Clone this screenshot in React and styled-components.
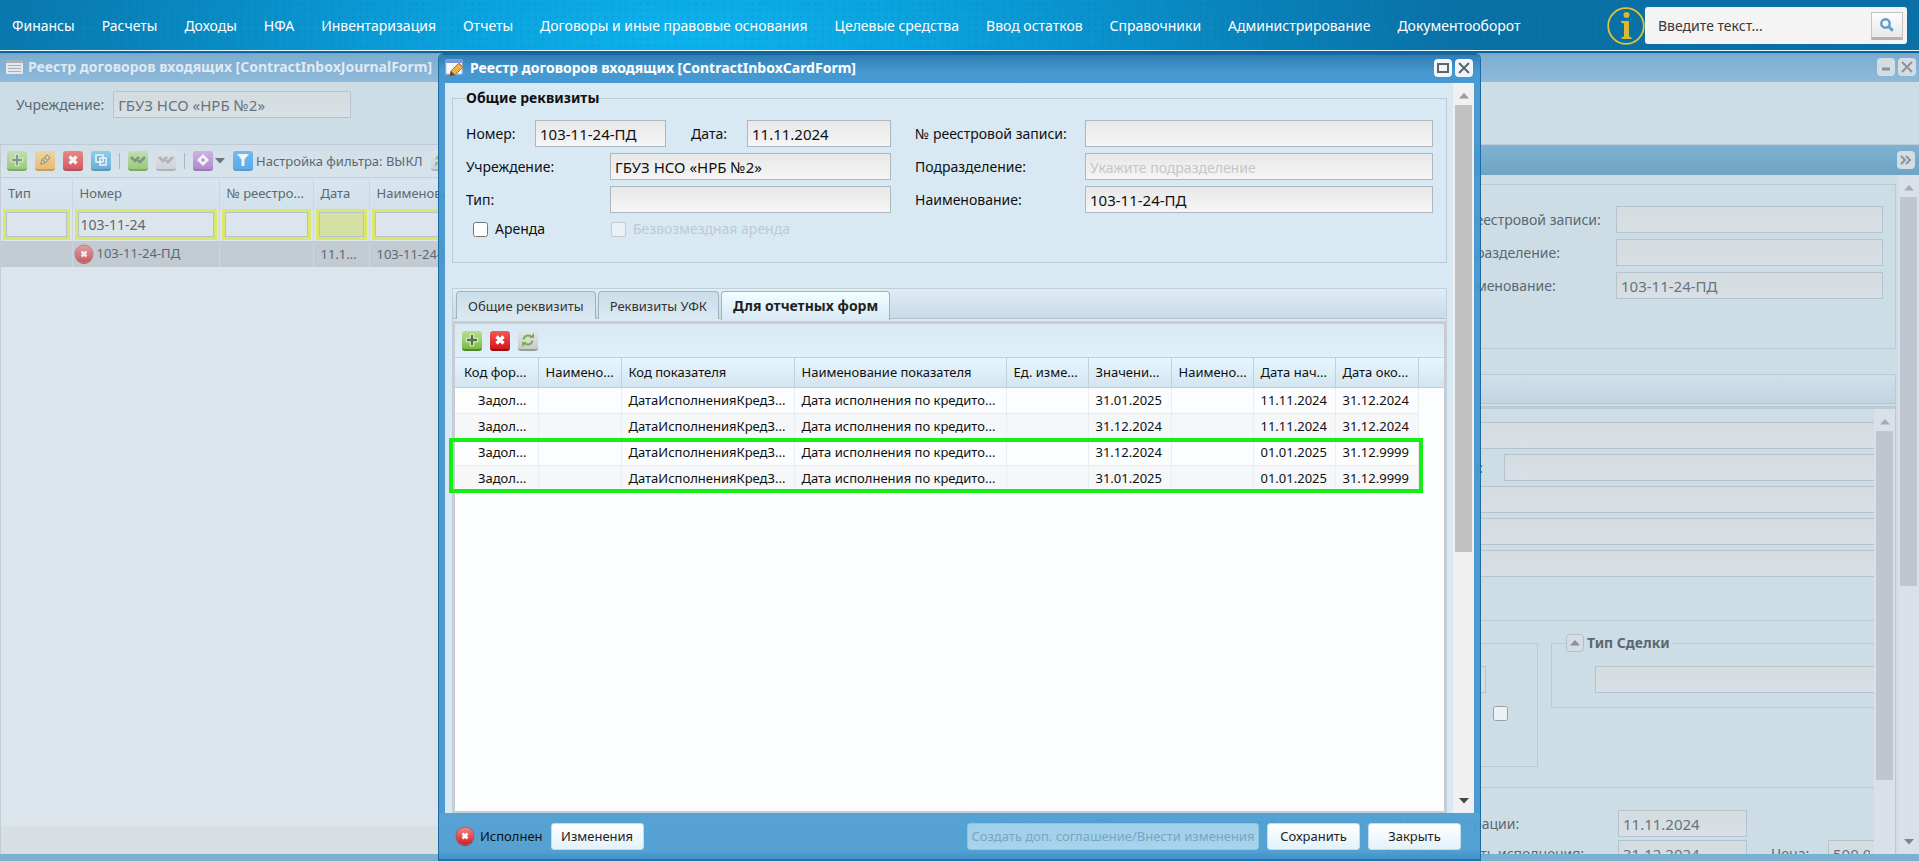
import React, { useState } from 'react'
import styled, { createGlobalStyle, css } from 'styled-components'

const GlobalStyle = createGlobalStyle`
  * { box-sizing: border-box; }
  body {
    margin: 0;
    overflow: hidden;
    background: #cddde6;
    color: #101010;
    font-family: Tahoma, "Noto Sans", "Liberation Sans", sans-serif;
    font-size: 14px;
    line-height: 20px;
  }
  button, input { font: inherit; color: inherit; }
`

const menuItems = [
  'Финансы', 'Расчеты', 'Доходы', 'НФА', 'Инвентаризация', 'Отчеты',
  'Договоры и иные правовые основания', 'Целевые средства', 'Ввод остатков',
  'Справочники', 'Администрирование', 'Документооборот',
]

const tabNames = ['Общие реквизиты', 'Реквизиты УФК', 'Для отчетных форм']

const columns = [
  { title: 'Код фор...', width: 83 },
  { title: 'Наимено...', width: 83 },
  { title: 'Код показателя', width: 173 },
  { title: 'Наименование показателя', width: 212 },
  { title: 'Ед. изме...', width: 82 },
  { title: 'Значени...', width: 83 },
  { title: 'Наимено...', width: 82 },
  { title: 'Дата нач...', width: 82 },
  { title: 'Дата око...', width: 83 },
]

const rows = [
  { value: '31.01.2025', from: '11.11.2024', to: '31.12.2024' },
  { value: '31.12.2024', from: '11.11.2024', to: '31.12.2024' },
  { value: '31.12.2024', from: '01.01.2025', to: '31.12.9999' },
  { value: '31.01.2025', from: '01.01.2025', to: '31.12.9999' },
]

/* ---------- icons ---------- */

const PlusIcon = () => (
  <svg width="16" height="16" viewBox="0 0 14 14"><path d="M5.5 2h3v3.5H12v3H8.5V12h-3V8.5H2v-3h3.5z" fill="#56704f" stroke="#dcf0cc" strokeWidth="1" /></svg>
)
const CrossIcon = () => (
  <svg width="14" height="14" viewBox="0 0 14 14"><path d="M3.5 3.5l7 7M10.5 3.5l-7 7" stroke="#fff" strokeWidth="3.2" /></svg>
)
const PencilIcon = () => (
  <svg width="14" height="14" viewBox="0 0 14 14"><path d="M3 11l1-4 5-5 3 3-5 5zM5 7l2 2M7 5l2.5 2.5" fill="#e8dcae" stroke="#80703c" strokeWidth="1.2" /></svg>
)
const CopyIcon = () => (
  <svg width="14" height="14" viewBox="0 0 14 14" fill="#3f9fd0" stroke="#fff" strokeWidth="1.5"><path d="M2 2h7v7H2zM6 5h6v7H6z" /></svg>
)
const CheckIcon = ({ color = '#4f7446' }) => (
  <svg width="16" height="14" viewBox="0 0 16 14"><path d="M1 4l4 4 4-4M6 5l4 4 5-5" fill="none" stroke={color} strokeWidth="2.8" /></svg>
)
const DiamondIcon = () => (
  <svg width="14" height="14" viewBox="0 0 14 14"><path d="M7 1l6 6-6 6-6-6z" fill="#fff" /><circle cx="7" cy="7" r="1.8" fill="#a66cc0" /></svg>
)
const FunnelIcon = () => (
  <svg width="14" height="14" viewBox="0 0 14 14"><path d="M1 1h12L8.5 6.5V13h-3V6.5z" fill="#fff" /></svg>
)
const RefreshIcon = () => (
  <svg width="14" height="14" viewBox="0 0 14 14" fill="none" stroke="#77b04c" strokeWidth="2"><path d="M2.5 6.5c.5-4 5-5 7.500-3M11.5 7.5c-.5 4-5 5-7.5 3" /><path d="M8 5h5V0zM6 9H1v5z" fill="#77b04c" stroke="none" /></svg>
)
const StatusIcon = () => (
  <svg width="20" height="20" viewBox="0 0 20 20">
    <defs><linearGradient id="status" x1="0" y1="0" x2="0" y2="1"><stop offset="0" stopColor="#f4888a" /><stop offset="1" stopColor="#cf1c25" /></linearGradient></defs>
    <circle cx="10" cy="11" r="9" fill="#7c1e25" />
    <circle cx="10" cy="10" r="9" fill="url(#status)" stroke="#c0555a" />
    <path d="M7.5 7.5l5 5M12.5 7.5l-5 5" stroke="#fff" strokeWidth="2.5" />
  </svg>
)
const Triangle = ({ down, color }) => (
  <svg width="10" height="6" viewBox="0 0 10 6"><path d={down ? 'M0 0h10L5 5.5z' : 'M0 5.5h10L5 0z'} fill={color} /></svg>
)
const ListIcon = () => (
  <svg width="17" height="14" viewBox="0 0 17 14"><path d="M0 0h17v14H0z" fill="#e4e8ec" /><path d="M0 1.5h17" stroke="#a8b2ba" strokeWidth="3" /><path d="M2 5.5h13M2 8.5h13M2 11.5h13" stroke="#a9b3bc" /></svg>
)
const FormIcon = () => (
  <svg width="20" height="20" viewBox="0 0 20 20">
    <path d="M1 2h16v14H1z" fill="#f7f9fd" stroke="#b9cdec" />
    <path d="M1 2h16v3H1z" fill="#7a96df" />
    <path d="M5 18l1-5 8-8 4 4-8 8z" fill="#eeb23e" stroke="#a8752a" />
    <path d="M14 5l4 4-1 1-4-4z" fill="#d98b74" />
    <path d="M5 18l1-5 4 4z" fill="#5c4a38" />
  </svg>
)
const InfoIcon = () => (
  <svg width="38" height="38" viewBox="0 0 38 38">
    <circle cx="19" cy="19" r="17.8" fill="none" stroke="#d9c437" strokeWidth="1.8" />
    <circle cx="19.5" cy="8" r="3" fill="#d9b92d" />
    <path d="M14 14h8v15.5l2.5 1V32h-10v-1.500l2.5-1V16.5L14 15.5z" fill="#d9b92d" />
  </svg>
)
const SearchIcon = () => (
  <svg width="16" height="16" viewBox="0 0 16 16" fill="none" stroke="#5b9dcc"><circle cx="6.5" cy="6.5" r="4.2" strokeWidth="2.4" /><path d="M9.800 9.800l4 4" strokeWidth="3" /></svg>
)

/* ---------- top menu ---------- */

const Page = styled.div`
  display: flex;
  flex-direction: column;
  height: 100vh;
  position: relative;
`
const TopBar = styled.header`
  display: flex;
  align-items: center;
  height: 53px;
  padding: 0 12px;
  flex: none;
  border-bottom: 2px solid #0d6699;
  box-shadow: inset 0 -1px 0 #e8f8ff;
  background:
    radial-gradient(circle, rgba(0, 50, 100, 0.06) 1px, transparent 2px) 0 0 / 7px 7px,
    radial-gradient(ellipse 780px 240px at 690px 34px, #0cb4ee 0%, #0a9fdb 35%, #0981b8 75%, #0971a6 100%);
`
const Menu = styled.nav`
  display: flex;
  flex: 1;
  gap: 27px;
  white-space: nowrap;
`
const MenuLink = styled.a`
  color: #fff;
  text-decoration: none;
`
const InfoButton = styled.button`
  display: flex;
  padding: 0;
  border: 0;
  background: none;
`
const SearchBox = styled.form`
  display: flex;
  align-items: center;
  width: 262px;
  height: 37px;
  padding: 4px;
  border-radius: 3px;
  background: #f4f4f4;
`
const SearchInput = styled.input`
  flex: 1;
  min-width: 0;
  padding: 0 9px;
  border: 0;
  background: none;
  &::placeholder { color: #383838; opacity: 1; }
`
const SearchButton = styled.button`
  display: flex;
  align-items: center;
  justify-content: center;
  width: 32px;
  height: 28px;
  border: 1px solid #c4c4c4;
  border-bottom: 3px solid #b4b4b4;
  background: linear-gradient(#fdfdfd, #e9e9e9);
`

/* ---------- shared parts ---------- */

const Input = styled.input`
  display: block;
  width: ${({ $width }) => ($width ? `${$width}px` : 'auto')};
  flex: ${({ $width }) => ($width ? 'none' : 1)};
  min-width: 0;
  height: 27px;
  padding: 0 4px;
  border: 1px solid #adb7c0;
  border-radius: 0;
  background: linear-gradient(#e8e8e8, #f5f5f5);
  font-size: 15px;
  &::placeholder { color: #c4c7ca; opacity: 1; font-size: 14px; }
  ${({ $muted }) => $muted && css`
    border-color: #b3c3d0;
    background: linear-gradient(#d4dcdf, #d9dfe6);
    color: #68747d;
  `}
  ${({ $cut }) => $cut && css`border-right: 0;`}
`
const Label = styled.label`
  flex: none;
  width: ${({ $width }) => ($width ? `${$width}px` : 'auto')};
  text-align: ${({ $align }) => $align || 'left'};
  white-space: nowrap;
`
const Line = styled.div`
  display: flex;
  align-items: center;
  gap: ${({ $gap }) => $gap || 0}px;
`
const Checkbox = styled.input.attrs({ type: 'checkbox' })`
  width: 15px;
  height: 15px;
  margin: 0;
  opacity: ${({ $muted }) => ($muted ? 0.6 : 1)};
`
const TitleBar = styled.div`
  display: flex;
  align-items: center;
  gap: 5px;
  height: 29px;
  flex: none;
  padding: 0 3px 2px 6px;
  color: #fff;
  font-weight: bold;
  background: ${({ $muted }) => ($muted ? 'linear-gradient(#7cadd0, #8fbada)' : 'linear-gradient(rgba(44, 124, 180, .97), rgba(68, 152, 208, .97) 60%)')};
  border-top: 1px solid ${({ $muted }) => ($muted ? '#6aa3cb' : '#1c65a0')};
`
const Title = styled.span`
  flex: 1;
  white-space: nowrap;
  color: ${({ $muted }) => ($muted ? '#dfeaf3' : '#fff')};
`
const WindowButtons = styled.span`
  display: flex;
  gap: 3px;
  padding-right: ${({ $inset }) => $inset || 0}px;
`
const WindowButton = styled.button`
  display: flex;
  align-items: center;
  justify-content: center;
  width: 18px;
  height: 18px;
  padding: 0;
  border: 0;
  border-radius: 4px;
  background: ${({ $muted }) => ($muted ? '#d5dde4' : '#f2f5f9')};
  color: ${({ $muted }) => ($muted ? '#8b949b' : '#5c6670')};
`
const tones = {
  green: ['#b8e08c', '#79bd43', '#4f8a2a'],
  red: ['#f25a52', '#d8141b', '#8c1015'],
  orange: ['#fbcf7c', '#f2a83a', '#b87c2c'],
  blue: ['#6fc3ea', '#2f97cd', '#1f6d99'],
  sky: ['#3aa8f4', '#1d8fe6', '#1775c0'],
  violet: ['#c99adf', '#a05cc0', '#774391'],
  gray: ['#e3e5e6', '#c9ccce', '#979b9e'],
}
const ToolButton = styled.button`
  display: flex;
  align-items: center;
  justify-content: center;
  width: 20px;
  height: 20px;
  flex: none;
  padding: 0;
  border: 0;
  border-bottom: 2px solid ${({ $tone }) => tones[$tone][2]};
  border-radius: 3px;
  background: linear-gradient(${({ $tone }) => tones[$tone][0]}, ${({ $tone }) => tones[$tone][1]});
  opacity: ${({ $fade }) => ($fade ? 0.65 : 1)};
`
const Track = styled.div`
  display: flex;
  flex-direction: column;
  align-items: center;
  width: 21px;
  flex: none;
  padding: 0 2px 9px;
  background: ${({ $muted }) => ($muted ? '#d9e0e7' : '#f0f0f0')};
`
const TrackCap = styled.div`
  display: flex;
  align-items: center;
  height: ${({ $end }) => ($end ? 'auto' : '22px')};
  margin-top: ${({ $end }) => ($end ? 'auto' : 0)};
  padding-top: ${({ $end }) => ($end ? 0 : 4)}px;
`
const Thumb = styled.div`
  width: 17px;
  height: ${({ $size }) => $size}%;
  background: ${({ $muted }) => ($muted ? '#c0c6cf' : '#c1c1c1')};
`

const Scrollbar = ({ size, muted, noEnd }) => (
  <Track $muted={muted}>
    <TrackCap><Triangle color={muted ? '#a3adb5' : '#9a9a9a'} /></TrackCap>
    <Thumb $size={size} $muted={muted} />
    {!noEnd && <TrackCap $end><Triangle down color={muted ? '#7d868d' : '#444'} /></TrackCap>}
  </Track>
)

/* ---------- journal window ---------- */

const Journal = styled.main`
  display: flex;
  flex-direction: column;
  flex: 1;
  min-height: 0;
  color: #5c6870;
  border-bottom: 7px solid #7ab0d1;
`
const JournalFilter = styled.div`
  flex: none;
  height: 63px;
  padding: 9px 16px;
  border-bottom: 1px solid #bccbd5;
`
const Split = styled.div`
  display: flex;
  flex: 1;
  min-height: 0;
`
const JournalGrid = styled.section`
  display: flex;
  flex-direction: column;
  flex: 1;
  min-width: 0;
  background: #dce5ec;
  border-left: 1px solid #c3cdd5;
`
const Toolbar = styled.div`
  display: flex;
  align-items: center;
  gap: 8px;
  height: 32px;
  flex: none;
  padding: 0 6px;
  font-size: 13px;
  white-space: nowrap;
  background: linear-gradient(#d3dfe8, #d8e4ec);
`
const Divider = styled.span`
  width: 1px;
  height: 16px;
  flex: none;
  background: #a9b7c1;
`
const DropTool = styled.span`
  display: flex;
  align-items: center;
  gap: 2px;
`
const FilterTool = styled.span`
  display: flex;
  align-items: center;
  gap: 3px;
`
const JournalTable = styled.table`
  width: 100%;
  table-layout: fixed;
  border-collapse: collapse;
  font-size: 13px;
  th, td {
    padding: 0 7px;
    overflow: hidden;
    text-align: left;
    font-weight: normal;
    white-space: nowrap;
    border-right: 1px solid #ccd6de;
  }
  th {
    height: 31px;
    border-top: 1px solid #c3cfd8;
    background: linear-gradient(#d7e6ee, #d2e0ea);
  }
`
const FilterCell = styled.td`
  && { height: 32px; padding: 0 2px; }
`
const FilterInput = styled.input`
  display: block;
  width: 100%;
  height: 31px;
  padding: 0 3px;
  border: 3px solid #dae76a;
  box-shadow: inset 0 0 0 1px #b7c0d0;
  border-radius: 0;
  font-size: 14px;
  background: ${({ $filled }) => ($filled ? '#d5e1a4' : '#dce5ec')};
`
const SelectedRow = styled.tr`
  height: 26px;
  background: #c2cad2;
`
const StatusCell = styled.td`
  && { padding: 0 1px; }
  svg { opacity: 0.65; vertical-align: middle; margin-right: 3px; }
`
const JournalFooter = styled.div`
  height: 28px;
  margin-top: auto;
  background: #d8dfe3;
`

/* ---------- right panel ---------- */

const SidePanel = styled.section`
  display: flex;
  flex-direction: column;
  flex: 1;
  min-width: 0;
`
const PanelHeader = styled.div`
  display: flex;
  align-items: center;
  justify-content: flex-end;
  height: 30px;
  flex: none;
  padding: 0 4px;
  background: linear-gradient(#7db2d4, #6ea3c3);
`
const PanelBody = styled.div`
  display: flex;
  flex: 1;
  min-height: 0;
`
const PanelContent = styled.div`
  display: flex;
  flex-direction: column;
  flex: 1;
  min-width: 0;
  padding: 9px 2px 0 8px;
`
const PanelGroup = styled.div`
  display: flex;
  flex-direction: column;
  align-items: flex-end;
  gap: 6px;
  height: 165px;
  flex: none;
  padding: 21px 12px;
  border: 1px solid #b9cad4;
`
const PanelTabs = styled.div`
  display: flex;
  flex-direction: column;
  flex: 1;
  min-height: 0;
  margin-top: 25px;
  border: 1px solid #b9cad4;
  border-bottom: 0;
`
const PanelTabStrip = styled.div`
  height: 34px;
  flex: none;
  border-bottom: 3px solid #bccad3;
  background: linear-gradient(#cfe0ea, #c3d5e1 28px, #b3c3ce 28px, #b3c3ce 29px, #cddde6 29px);
`
const PanelScroll = styled.div`
  display: flex;
  flex: 1;
  min-height: 0;
`
const Details = styled.div`
  flex: 1;
  min-width: 0;
  padding: 13px 0 0 8px;
  overflow: hidden;
`
const Stack = styled.div`
  display: flex;
  flex-direction: column;
  gap: ${({ $gap }) => $gap}px;
  padding-top: ${({ $top }) => $top || 0}px;
  ${Line} { height: 27px; }
`
const Rule = styled.hr`
  height: 1px;
  margin: ${({ $top }) => $top}px 0 0;
  border: 0;
  background: #b9cad4;
`
const Groups = styled.div`
  display: grid;
  grid-template-columns: 1fr 323px;
  gap: 13px;
  align-items: start;
  margin-top: 12px;
`
const PlainGroup = styled.div`
  height: 124px;
  margin-top: 10px;
  padding: 22px 29px 0 13px;
  border: 1px solid #b9cad4;
`
const PlainGroupRow = styled.div`
  display: flex;
  padding-right: ${({ $inset }) => $inset || 0}px;
  margin-bottom: 13px;
  justify-content: flex-end;
`
const DealGroup = styled.fieldset`
  display: flex;
  height: 75px;
  min-width: 0;
  margin: 0;
  padding: 13px 0 0 43px;
  border: 1px solid #b9cad4;
  border-right: 0;
`
const DealLegend = styled.legend`
  display: flex;
  align-items: center;
  gap: 3px;
  margin-left: -31px;
  padding-right: 2px;
  font-weight: bold;
`
const ToggleButton = styled(WindowButton)`
  border: 1px solid #b2bec8;
`

/* ---------- card window ---------- */

const Card = styled.section`
  display: flex;
  flex-direction: column;
  position: absolute;
  inset: 53px 0 0;
  width: 100%;
  max-width: 1043px;
  margin: 0 auto;
  border: 1px solid #1c6aa5;
  border-bottom: 2px solid #1d74b0;
  border-radius: 6px 6px 0 0;
  overflow: hidden;
`
const CardFrame = styled.div`
  display: flex;
  flex: 1;
  min-height: 0;
  border: solid rgba(68, 150, 206, 0.94);
  border-width: 0 6px;
  background: #d9e9f4;
  background-clip: padding-box;
`
const CardContent = styled.div`
  display: flex;
  flex-direction: column;
  flex: 1;
  min-width: 0;
  padding: 5px 6px 0 7px;
`
const Requisites = styled.fieldset`
  display: grid;
  grid-template-columns: 425px 1fr;
  gap: 6px 24px;
  height: 175px;
  flex: none;
  align-content: start;
  min-width: 0;
  margin: 0;
  padding: 12px 13px 0;
  border: 1px solid #bfcbd3;
`
const Legend = styled.legend`
  padding: 0;
  font-weight: bold;
`
const CheckLine = styled(Line)`
  height: 20px;
  padding-left: 7px;
  color: ${({ $off }) => ($off ? '#bccad3' : 'inherit')};
`
const TabPanel = styled.div`
  display: flex;
  flex-direction: column;
  flex: 1;
  min-height: 0;
  margin-top: 25px;
  border: 1px solid #c3ced6;
  border-bottom: 0;
`
const TabStrip = styled.div`
  display: flex;
  gap: 2px;
  height: 32px;
  flex: none;
  padding: 2px 3px 0;
  background: linear-gradient(#deedf7, #c9dbe7 29px, #b3c3ce 29px, #b3c3ce 30px, #d9e9f4 30px);
`
const Tab = styled.button`
  height: 28px;
  padding: 0 11px;
  border: 1px solid #9fb4c2;
  border-bottom: 0;
  border-radius: 4px 4px 0 0;
  color: #333;
  font-size: 13px;
  background: linear-gradient(#cbdde9, #dbe9f2);
  ${({ $active }) => $active && css`
    height: 29px;
    color: #222;
    font-size: 14px;
    font-weight: bold;
    background: linear-gradient(#f0ffff, #d9e9f4);
  `}
`
const GridBox = styled.div`
  position: relative;
  flex: 1;
  min-height: 0;
  border: 2px solid #c9cdd1;
  border-width: 3px 2px 2px;
  background: #fcfdfe;
`
const CardToolbar = styled(Toolbar)`
  height: 34px;
  padding: 0 7px;
  background: linear-gradient(#d9e9f4, #e0f0fa);
  border-bottom: 1px solid #c4d0d8;
`
const Table = styled.table`
  width: 100%;
  table-layout: fixed;
  border-collapse: collapse;
  font-size: 13px;
  th, td {
    padding: 0 0 0 7px;
    text-align: left;
    font-weight: normal;
    white-space: nowrap;
  }
  th {
    height: 29px;
    border-right: 1px solid #c3d0d8;
    border-bottom: 1px solid #c0ccd4;
    background: linear-gradient(#e6f6ff, #d3e5f0);
  }
  th:first-child { padding-left: 9px; }
  td {
    height: 26px;
    border-right: 1px solid #ebedef;
    border-bottom: 1px solid #e8eaec;
  }
  td:first-child { padding-left: 23px; }
  tbody tr:nth-child(even) { background: #f6f7f9; }
  th:last-child, td:last-child { border-right: 0; }
  td:last-child { border-bottom: 0; background: #fcfdfe; }
`
const Highlight = styled.div`
  position: absolute;
  top: 114px;
  left: -6px;
  right: 21px;
  height: 55px;
  border: 4px solid #14f014;
  pointer-events: none;
`
const CardFooter = styled.footer`
  display: flex;
  align-items: center;
  gap: 8px;
  height: 46px;
  flex: none;
  padding: 0 19px 0 16px;
  font-size: 13px;
  background: linear-gradient(rgba(78, 158, 210, 0.95) 80%, rgba(62, 144, 200, 0.95));
`
const Status = styled.span`
  display: flex;
  align-items: center;
  gap: 5px;
`
const Spacer = styled.span`
  flex: 1;
`
const FooterButton = styled.button`
  min-width: 93px;
  height: 27px;
  padding: 0 2px;
  border: 1px solid #c2dced;
  border-radius: 3px;
  color: #222;
  white-space: nowrap;
  background: linear-gradient(#fff, #e2f2fb);
  &:disabled {
    width: 292px;
    border-color: #8fc3e2;
    color: #78a6c2;
    background: linear-gradient(#9fd0ea, #a8d3ec);
  }
`

const JournalWindow = () => (
  <Journal>
    <TitleBar $muted>
      <ListIcon />
      <Title $muted>Реестр договоров входящих [ContractInboxJournalForm]</Title>
      <WindowButtons>
        <WindowButton $muted aria-label="Свернуть"><svg width="10" height="10"><path d="M1 7h8" stroke="currentColor" strokeWidth="3" /></svg></WindowButton>
        <WindowButton $muted aria-label="Закрыть"><svg width="12" height="12"><path d="M1 1l10 10M11 1L1 11" stroke="currentColor" strokeWidth="2" /></svg></WindowButton>
      </WindowButtons>
    </TitleBar>
    <JournalFilter>
      <Line $gap={9}>
        <Label htmlFor="j-org">Учреждение:</Label>
        <Input id="j-org" $muted $width={238} defaultValue="ГБУЗ НСО «НРБ №2»" />
      </Line>
    </JournalFilter>
    <Split>
      <JournalGrid>
        <Toolbar>
          <ToolButton $fade $tone="green" aria-label="Добавить"><PlusIcon /></ToolButton>
          <ToolButton $fade $tone="orange" aria-label="Изменить"><PencilIcon /></ToolButton>
          <ToolButton $fade $tone="red" aria-label="Удалить"><CrossIcon /></ToolButton>
          <ToolButton $fade $tone="blue" aria-label="Копировать"><CopyIcon /></ToolButton>
          <Divider />
          <ToolButton $fade $tone="green" aria-label="Исполнить"><CheckIcon /></ToolButton>
          <ToolButton $fade $tone="gray" aria-label="Отменить"><CheckIcon color="#9aa0a4" /></ToolButton>
          <Divider />
          <DropTool>
            <ToolButton $fade $tone="violet" aria-label="Действия"><DiamondIcon /></ToolButton>
            <Triangle down color="#68737b" />
          </DropTool>
          <FilterTool>
            <ToolButton $fade $tone="sky" aria-label="Фильтр"><FunnelIcon /></ToolButton>
            Настройка фильтра: ВЫКЛ
          </FilterTool>
          <ToolButton $fade $tone="gray" aria-label="Обновить"><RefreshIcon /></ToolButton>
        </Toolbar>
        <JournalTable>
          <colgroup>
            <col width="71" /><col width="147" /><col width="94" /><col width="56" /><col />
          </colgroup>
          <thead>
            <tr><th>Тип</th><th>Номер</th><th>№ реестро...</th><th>Дата</th><th>Наименование</th></tr>
          </thead>
          <tbody>
            <tr>
              <FilterCell><FilterInput aria-label="Тип" /></FilterCell>
              <FilterCell><FilterInput aria-label="Номер" defaultValue="103-11-24" /></FilterCell>
              <FilterCell><FilterInput aria-label="№ реестровой записи" /></FilterCell>
              <FilterCell><FilterInput aria-label="Дата" $filled /></FilterCell>
              <FilterCell><FilterInput aria-label="Наименование" /></FilterCell>
            </tr>
            <SelectedRow>
              <td />
              <StatusCell><StatusIcon />103-11-24-ПД</StatusCell>
              <td />
              <td>11.1...</td>
              <td>103-11-24-ПД</td>
            </SelectedRow>
          </tbody>
        </JournalTable>
        <JournalFooter />
      </JournalGrid>
      <SidePanel>
        <PanelHeader>
          <WindowButton $muted aria-label="Свернуть панель"><svg width="12" height="10" fill="none" stroke="currentColor" strokeWidth="2"><path d="M1 1l4 4-4 4M6 1l4 4-4 4" /></svg></WindowButton>
        </PanelHeader>
        <PanelBody>
          <PanelContent>
            <PanelGroup>
              <Line><Label htmlFor="p-reg" $width={167}>№ реестровой записи:</Label><Input id="p-reg" $muted $width={267} /></Line>
              <Line><Label htmlFor="p-dep" $width={167}>Подразделение:</Label><Input id="p-dep" $muted $width={267} /></Line>
              <Line><Label htmlFor="p-name" $width={167}>Наименование:</Label><Input id="p-name" $muted $width={267} defaultValue="103-11-24-ПД" /></Line>
            </PanelGroup>
            <PanelTabs>
              <PanelTabStrip />
              <PanelScroll>
                <Details>
                  <Stack $gap={5}>
                    <Line><Input $muted $cut aria-label="Вид договора" /></Line>
                    <Line $gap={21}><Label htmlFor="p-basis" $width={506} $align="right">НДС):</Label><Input id="p-basis" $muted $cut /></Line>
                    <Line><Input $muted $cut aria-label="Предмет договора" /></Line>
                    <Line><Input $muted $cut aria-label="Способ закупки" /></Line>
                    <Line><Input $muted $cut aria-label="Примечание" /></Line>
                  </Stack>
                  <Rule $top={43} />
                  <Groups>
                    <PlainGroup>
                      <PlainGroupRow $inset={22}><Input $muted aria-label="Срок" /></PlainGroupRow>
                      <PlainGroupRow><Checkbox $muted aria-label="Признак" /></PlainGroupRow>
                    </PlainGroup>
                    <DealGroup>
                      <DealLegend>
                        <ToggleButton $muted aria-label="Свернуть группу"><Triangle color="#87929a" /></ToggleButton>
                        Тип Сделки
                      </DealLegend>
                      <Input $muted $cut aria-label="Тип Сделки" />
                    </DealGroup>
                  </Groups>
                  <Rule $top={20} />
                  <Stack $gap={3} $top={22}>
                    <Line>
                      <Label $width={21} />
                      <Label $width={98}>Контрагент:</Label>
                      <Label $width={297}>Общество с ограниченной ответственн...</Label>
                      <Label htmlFor="p-regdate" $width={225}>Дата регистрации:</Label>
                      <Input id="p-regdate" $muted $width={129} defaultValue="11.11.2024" />
                    </Line>
                    <Line>
                      <Label $width={607} $align="right" htmlFor="p-end">Обязательность исполнения:</Label>
                      <Label $width={34} />
                      <Input id="p-end" $muted $width={129} defaultValue="31.12.2024" />
                      <Label $width={24} />
                      <Label htmlFor="p-price" $width={57}>Цена:</Label>
                      <Input id="p-price" $muted $cut defaultValue="500 000.00" />
                    </Line>
                  </Stack>
                </Details>
                <Scrollbar muted noEnd size={80} />
              </PanelScroll>
            </PanelTabs>
          </PanelContent>
          <Scrollbar muted size={58} />
        </PanelBody>
      </SidePanel>
    </Split>
  </Journal>
)

const CardWindow = () => {
  const [active, setActive] = useState(2)
  return (
    <Card>
      <TitleBar>
        <FormIcon />
        <Title>Реестр договоров входящих [ContractInboxCardForm]</Title>
        <WindowButtons $inset={4}>
          <WindowButton aria-label="Развернуть"><svg width="12" height="10"><path d="M1 1h10v8H1z" fill="none" stroke="currentColor" strokeWidth="2" /></svg></WindowButton>
          <WindowButton aria-label="Закрыть"><svg width="12" height="12"><path d="M1 1l10 10M11 1L1 11" stroke="currentColor" strokeWidth="2" /></svg></WindowButton>
        </WindowButtons>
      </TitleBar>
      <CardFrame>
        <CardContent>
          <Requisites>
            <Legend>Общие реквизиты</Legend>
            <Line>
              <Label htmlFor="number" $width={69}>Номер:</Label>
              <Input id="number" $width={131} defaultValue="103-11-24-ПД" />
              <Label htmlFor="date" $width={61} $align="right">Дата:</Label>
              <Spacer />
              <Input id="date" $width={144} defaultValue="11.11.2024" />
            </Line>
            <Line><Label htmlFor="reg" $width={170}>№ реестровой записи:</Label><Input id="reg" /></Line>
            <Line><Label htmlFor="org" $width={144}>Учреждение:</Label><Input id="org" defaultValue="ГБУЗ НСО «НРБ №2»" /></Line>
            <Line><Label htmlFor="dep" $width={170}>Подразделение:</Label><Input id="dep" placeholder="Укажите подразделение" /></Line>
            <Line><Label htmlFor="type" $width={144}>Тип:</Label><Input id="type" /></Line>
            <Line><Label htmlFor="name" $width={170}>Наименование:</Label><Input id="name" defaultValue="103-11-24-ПД" /></Line>
            <Line>
              <CheckLine $gap={7}>
                <Checkbox id="rent" />
                <Label htmlFor="rent" $width={109}>Аренда</Label>
              </CheckLine>
              <CheckLine $gap={7} $off>
                <Checkbox id="free" disabled />
                <Label htmlFor="free">Безвозмездная аренда</Label>
              </CheckLine>
            </Line>
          </Requisites>
          <TabPanel>
            <TabStrip role="tablist">
              {tabNames.map((name, i) => (
                <Tab key={name} role="tab" aria-selected={active === i} $active={active === i} onClick={() => setActive(i)}>{name}</Tab>
              ))}
            </TabStrip>
            <GridBox>
              <CardToolbar>
                <ToolButton $tone="green" aria-label="Добавить"><PlusIcon /></ToolButton>
                <ToolButton $tone="red" aria-label="Удалить"><CrossIcon /></ToolButton>
                <ToolButton $tone="gray" aria-label="Обновить"><RefreshIcon /></ToolButton>
              </CardToolbar>
              <Table>
                <colgroup>
                  {columns.map((c, i) => <col key={i} width={c.width} />)}
                  <col />
                </colgroup>
                <thead>
                  <tr>{columns.map((c, i) => <th key={i}>{c.title}</th>)}<th /></tr>
                </thead>
                <tbody>
                  {rows.map((r, i) => (
                    <tr key={i}>
                      <td>Задол...</td>
                      <td />
                      <td>ДатаИсполненияКредЗ...</td>
                      <td>Дата исполнения по кредито...</td>
                      <td />
                      <td>{r.value}</td>
                      <td />
                      <td>{r.from}</td>
                      <td>{r.to}</td>
                      <td />
                    </tr>
                  ))}
                </tbody>
              </Table>
              <Highlight />
            </GridBox>
          </TabPanel>
        </CardContent>
        <Scrollbar size={62} />
      </CardFrame>
      <CardFooter>
        <Status><StatusIcon />Исполнен</Status>
        <FooterButton>Изменения</FooterButton>
        <Spacer />
        <FooterButton disabled>Создать доп. соглашение/Внести изменения</FooterButton>
        <FooterButton>Сохранить</FooterButton>
        <FooterButton>Закрыть</FooterButton>
      </CardFooter>
    </Card>
  )
}

const App = () => (
  <Page>
    <GlobalStyle />
    <TopBar>
      <Menu>
        {menuItems.map((item) => <MenuLink key={item} href="#">{item}</MenuLink>)}
      </Menu>
      <InfoButton aria-label="Информация"><InfoIcon /></InfoButton>
      <SearchBox>
        <SearchInput aria-label="Поиск" placeholder="Введите текст..." />
        <SearchButton type="button" aria-label="Найти"><SearchIcon /></SearchButton>
      </SearchBox>
    </TopBar>
    <JournalWindow />
    <CardWindow />
  </Page>
)

export default App
